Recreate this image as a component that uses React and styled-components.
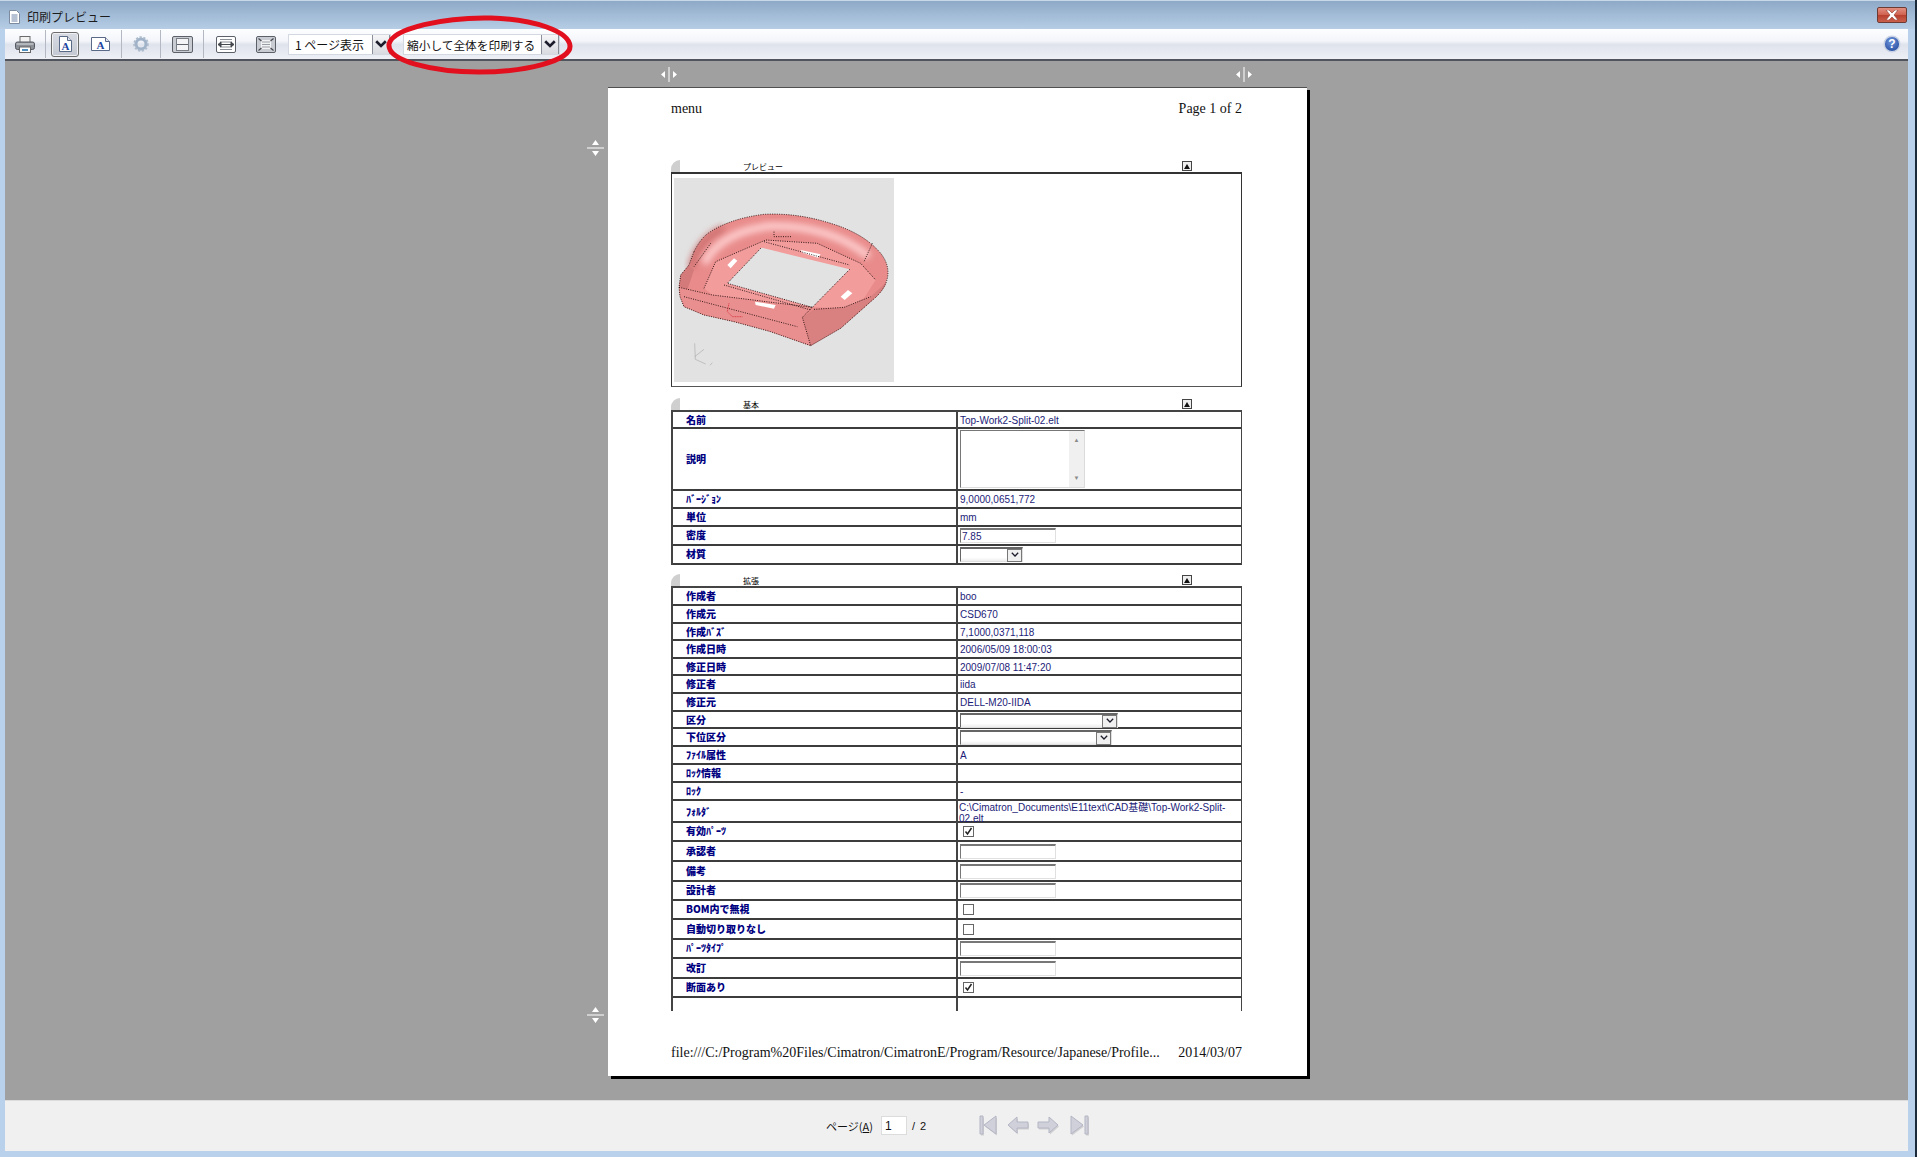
import React from "react";
import styled, { createGlobalStyle } from "styled-components";

const GlobalStyle = createGlobalStyle`
  html, body {
    margin: 0;
    padding: 0;
    background: #b9d1ea;
    overflow: hidden;
  }
  * {
    box-sizing: border-box;
  }
`;

const Window = styled.div`
  position: relative;
  width: 1917px;
  height: 1157px;
  display: flex;
  flex-direction: column;
  background: #b9d1ea;
  border-right: 2px solid #1a2a3a;
  font-family: "Noto Sans CJK JP", "Liberation Sans", sans-serif;
`;

const TitleBar = styled.div`
  height: 29px;
  display: flex;
  align-items: center;
  padding: 3px 8px 0 9px;
  gap: 7px;
  background: linear-gradient(#8ea9c7, #b6cde5);
  border-top: 1px solid #c8d8e8;
  font-size: 12px;
  color: #1c1c1c;
`;

const CloseButton = styled.div`
  margin-left: auto;
  width: 30px;
  height: 16px;
  margin-top: -3px;
  display: flex;
  align-items: center;
  justify-content: center;
  border: 1px solid #6e3a34;
  border-radius: 2px;
  background: linear-gradient(#e28f80 0%, #d0604e 50%, #b8402e 52%, #c9604c 100%);
`;

const Body = styled.div`
  flex: 1;
  display: flex;
  flex-direction: column;
  margin: 0 7px 6px 5px;
  min-height: 0;
`;

const Toolbar = styled.div`
  height: 30px;
  display: flex;
  align-items: center;
  padding-left: 10px;
  background: linear-gradient(#fdfeff 0%, #f3f5fa 40%, #dfe3ec 52%, #eef0f6 100%);
`;

const ToolIcon = styled.div`
  width: ${(p) => p.$w}px;
  margin-left: ${(p) => p.$ml || 0}px;
  height: 25px;
  flex: none;
  display: flex;
  align-items: center;
  justify-content: center;
  ${(p) =>
    p.$active &&
    `
    border: 1px solid #6c6c6c;
    border-radius: 3px;
    background: linear-gradient(#d8dbe2, #c4c8d2);
    box-shadow: inset 0 0 0 1px #eef0f4;
  `}
`;

const ToolSep = styled.div`
  width: 1px;
  height: 28px;
  flex: none;
  margin-left: ${(p) => p.$ml}px;
  background: #b4b8c2;
`;

const ToolCombo = styled.div`
  width: ${(p) => p.$w}px;
  margin-left: ${(p) => p.$ml}px;
  height: 21px;
  flex: none;
  display: flex;
  align-items: center;
  justify-content: space-between;
  padding-left: ${(p) => p.$pad}px;
  background: #fff;
  border: 1px solid #d4d8e0;
  font-size: ${(p) => p.$size}px;
  color: #111;
  white-space: nowrap;
  overflow: hidden;
`;

const ToolComboArrow = styled.div`
  width: 18px;
  height: 21px;
  flex: none;
  display: flex;
  align-items: center;
  justify-content: center;
  border: 1px solid #8a8f9a;
  background: linear-gradient(#f6f6f8, #d8dae0);
`;

const Viewer = styled.div`
  position: relative;
  height: 1041px;
  flex: none;
  display: flex;
  justify-content: center;
  padding: 26px 0 0 2px;
  background: #a0a0a0;
  border-top: 2px solid #50545c;
`;

const MarginHandle = styled.div`
  position: absolute;
  left: ${(p) => p.$x}px;
  top: ${(p) => p.$y}px;
  display: flex;
  line-height: 0;
`;

const Page = styled.div`
  width: 699px;
  height: 989px;
  flex: none;
  display: flex;
  flex-direction: column;
  padding: 13px 65px 15px 63px;
  background: #fff;
  border-top: 1px solid #505050;
  box-shadow: 3px 3px 0 #000;
  font-family: "Liberation Serif", serif;
  color: #111;
`;

const PageLine = styled.div`
  display: flex;
  justify-content: space-between;
  font-size: 14px;
  line-height: 16px;
  white-space: nowrap;
  margin-top: ${(p) => p.$mt || "0"};
`;

const SectionHead = styled.div`
  position: relative;
  height: 12px;
  margin-top: ${(p) => p.$mt}px;
  padding-left: 72px;
  font-family: "Noto Sans CJK JP", sans-serif;
  font-size: 8px;
  line-height: 13px;
  color: #000;
`;

const HeadCorner = styled.div`
  position: absolute;
  left: 0;
  top: 0;
  width: 9px;
  height: 12px;
  background: #cfcfcf;
  border-top-left-radius: 9px;
`;

const HeadToggle = styled.div`
  position: absolute;
  left: 511px;
  top: 1px;
  width: 10px;
  height: 10px;
  display: flex;
  align-items: center;
  justify-content: center;
  border: 1px solid #444;
  background: #eee;
`;

const PreviewFrame = styled.div`
  height: 215px;
  padding: 4px 2px;
  border: 1px solid #333;
  border-top-width: 2px;
  border-bottom-color: #555;
`;

const PreviewImage = styled.div`
  width: 220px;
  height: 204px;
  background: #e2e2e2;
  line-height: 0;
`;

const PropTable = styled.div`
  border-top: 2px solid #444;
  border-left: 2px solid #444;
  border-right: 1px solid #444;
`;

const Row = styled.div`
  display: grid;
  grid-template-columns: 285px 1fr;
  height: ${(p) => p.$h}px;
  border-bottom: ${(p) => (p.$open ? "none" : "2px solid #3c3c3c")};
`;

const Label = styled.div`
  display: flex;
  align-items: center;
  padding: 0 0 2px 13px;
  border-right: 2px solid #444;
  font-family: "Noto Sans CJK JP", sans-serif;
  font-weight: 900;
  font-size: 10px;
  color: #000080;
  white-space: nowrap;
`;

const Value = styled.div`
  display: flex;
  align-items: center;
  padding-left: 2px;
  font-family: "Liberation Sans", "Noto Sans CJK JP", sans-serif;
  font-size: 10px;
  line-height: 12px;
  color: #1c1c78;
  min-width: 0;
`;

const WrapText = styled.div`
  margin: 1px 0 0 -1px;
  line-height: 11px;
`;

const TextBox = styled.input`
  width: 96px;
  height: 15px;
  padding: 0 1px;
  border-style: solid;
  border-width: 2px 1px 1px 1px;
  border-color: #777 #e0e0e0 #e0e0e0 #777;
  outline: none;
  background: #fff;
  font-family: "Liberation Sans", sans-serif;
  font-size: 10px;
  color: #1c1c78;
`;

const MemoBox = styled.div`
  width: 125px;
  height: 58px;
  display: flex;
  justify-content: flex-end;
  border-style: solid;
  border-width: 1px;
  border-color: #777 #dcdcdc #dcdcdc #777;
  background: #fff;
`;

const MemoScroll = styled.div`
  width: 15px;
  display: flex;
  flex-direction: column;
  justify-content: space-between;
  align-items: center;
  padding: 6px 0;
  background: #f0f0f0;
  font-size: 6px;
  line-height: 6px;
  color: #8a8a8a;
`;

const ComboBox = styled.div`
  width: ${(p) => p.$w}px;
  height: 15px;
  display: flex;
  justify-content: flex-end;
  align-items: center;
  border-style: solid;
  border-width: 2px 1px 1px 1px;
  border-color: #666 #e0e0e0 #e0e0e0 #666;
  background: linear-gradient(#fff 70%, #eee);
`;

const ComboArrow = styled.div`
  width: 15px;
  height: 13px;
  display: flex;
  align-items: center;
  justify-content: center;
  border: 1px solid #777;
  background: #f0f0f0;
`;

const CheckBox = styled.div`
  width: 11px;
  height: 11px;
  margin-left: 3px;
  display: flex;
  align-items: center;
  justify-content: center;
  border: 1px solid #666;
  background: #fff;
`;

const BottomBar = styled.div`
  height: 51px;
  flex: none;
  display: flex;
  align-items: center;
  padding: 0 0 1px 821px;
  background: #f0f0f0;
  border-top: 1px solid #dcdcdc;
  font-size: 11px;
  color: #111;
`;

const PageLabel = styled.span`
  width: 55px;
  flex: none;
  u {
    text-underline-offset: 1px;
  }
`;

const PageInput = styled.input`
  width: 26px;
  height: 19px;
  flex: none;
  padding: 0 0 0 3px;
  border: 1px solid #dcdcdc;
  outline: none;
  background: #fff;
  font-family: "Liberation Sans", sans-serif;
  font-size: 12px;
  color: #111;
`;

const PageTotal = styled.span`
  width: 72px;
  flex: none;
  padding-left: 5px;
  font-family: "Liberation Sans", sans-serif;
  word-spacing: 2px;
`;

const NavButton = styled.div`
  width: ${(p) => p.$w}px;
  margin-right: ${(p) => p.$mr}px;
  height: 21px;
  flex: none;
  line-height: 0;
`;

const Annotation = styled.svg`
  position: absolute;
  left: 383px;
  top: 14px;
  pointer-events: none;
`;

const DocIcon = () => (
  <svg width="11" height="14" viewBox="0 0 11 14">
    <path d="M.5.5h7l3 3v10H.5z" fill="#fff" stroke="#7d8ba0" />
    <path d="M2.5 5h6M2.5 7h6M2.5 9h6M2.5 11h6" stroke="#6f86a8" />
  </svg>
);

const CloseGlyph = () => (
  <svg width="14" height="10" viewBox="0 0 14 10">
    <path d="M1 0h3l3 3 3-3h3L9 5l4 5h-3L7 7l-3 3H1l4-5z" fill="#fff" stroke="#8a3a30" strokeWidth=".6" />
  </svg>
);

const PrinterIcon = () => (
  <svg width="20" height="17" viewBox="0 0 20 17">
    <rect x="5" y=".5" width="10" height="6" fill="#f2f2f2" stroke="#6a6a6a" />
    <rect x=".5" y="6" width="19" height="7.5" rx="2" fill="#8b8f96" stroke="#55585e" />
    <rect x="1.5" y="7" width="17" height="2" fill="#b4b7bc" />
    <rect x="4.5" y="11" width="11" height="5.5" fill="#fff" stroke="#666" />
    <rect x="7" y="13" width="6" height="2" fill="#4f8fc0" />
  </svg>
);

const PageA = ({ wide }) => {
  const w = wide ? 19 : 13;
  return (
    <svg width={w} height={wide ? 14 : 16} viewBox={`0 0 ${w} ${wide ? 14 : 16}`}>
      <path d={`M.5.5h${w - 5}l4 4v${wide ? 9 : 11}H.5z`} fill="#fff" stroke="#5a6a86" />
      <path d={`M${w - 4.5} .5v4h4`} fill="#dfe4ee" stroke="#5a6a86" />
      <text
        x={w / 2}
        y={wide ? 12 : 14}
        textAnchor="middle"
        fontFamily="Liberation Serif"
        fontWeight="700"
        fontSize="11"
        fill="#1c44a0"
      >
        A
      </text>
    </svg>
  );
};

const GearIcon = () => (
  <svg width="16" height="16" viewBox="0 0 16 16">
    <circle cx="8" cy="8" r="5" fill="none" stroke="#9fb2c8" strokeWidth="3" />
    <circle cx="8" cy="8" r="6.8" fill="none" stroke="#aebccd" strokeWidth="2" strokeDasharray="2.2 1.6" />
  </svg>
);

const FitFrame = ({ children, w = 21, h = 17, fill = "#dfe1e6" }) => (
  <svg width={w} height={h} viewBox={`0 0 ${w} ${h}`}>
    <rect x=".5" y=".5" width={w - 1} height={h - 1} rx="1.5" fill={fill} stroke="#5c6068" />
    {children}
  </svg>
);

const SinglePageIcon = () => (
  <FitFrame fill="#c9ccd3">
    <rect x="4.5" y="2.5" width="12" height="12" fill="#f4f4f6" stroke="#7a7e86" />
    <path d="M5 8.5h11" stroke="#60646c" />
  </FitFrame>
);

const FitWidthIcon = () => (
  <FitFrame w={20} fill="#fff">
    <path d="M4 3.5h12M4 6h12M4 11h12M4 13.5h12" stroke="#8a8e96" />
    <path d="M2 8.5h16M2 8.5l3-2.5v5zM18 8.5l-3-2.5v5z" fill="#44484f" stroke="#44484f" />
  </FitFrame>
);

const FitPageIcon = () => (
  <FitFrame w={20} fill="#c9ccd3">
    <rect x="5" y="4" width="10" height="9" fill="#f1f2f4" />
    <path d="M6 6h8M6 8.5h8M6 11h8" stroke="#9a9ea6" />
    <path d="M2.5 2.5l3 2.5M17.5 2.5l-3 2.5M2.5 14.5l3-2.5M17.5 14.5l-3-2.5" stroke="#44484f" strokeWidth="1.2" />
  </FitFrame>
);

const HelpIcon = () => (
  <svg width="18" height="18" viewBox="0 0 18 18">
    <defs>
      <radialGradient id="helpFill" cx="45%" cy="35%" r="70%">
        <stop offset="0%" stopColor="#6f95dc" />
        <stop offset="100%" stopColor="#234a9c" />
      </radialGradient>
    </defs>
    <circle cx="9" cy="9" r="7.8" fill="url(#helpFill)" stroke="#c8d2e4" strokeWidth="1.4" />
    <text x="9" y="13.2" textAnchor="middle" fontFamily="Liberation Sans" fontWeight="700" fontSize="12" fill="#fff">
      ?
    </text>
  </svg>
);

const Chevron = ({ size = 12, weight = 2.2 }) => (
  <svg width={size} height={size * 0.7} viewBox="0 0 10 7">
    <path d="M1 1l4 4 4-4" fill="none" stroke="#1c1c2c" strokeWidth={weight} />
  </svg>
);

const VerticalHandle = () => (
  <svg width="18" height="15" viewBox="0 0 18 15">
    <path d="M9 0v15" stroke="#fff" />
    <path d="M1 7.5l4-3.5v7zM17 7.5l-4-3.5v7z" fill="#fff" />
  </svg>
);

const HorizontalHandle = () => (
  <svg width="17" height="18" viewBox="0 0 17 18">
    <path d="M0 9h17" stroke="#fff" />
    <path d="M8.5 1l3.5 5H5zM8.5 17l3.5-5H5z" fill="#fff" />
  </svg>
);

const ToggleGlyph = () => (
  <svg width="6" height="5" viewBox="0 0 6 5">
    <path d="M3 0l3 5H0z" fill="#111" />
  </svg>
);

const Tick = () => (
  <svg width="9" height="9" viewBox="0 0 9 9">
    <path d="M1.5 4.5l2 2.5 4-6" fill="none" stroke="#222" strokeWidth="1.5" />
  </svg>
);

const NavIcon = ({ kind }) => {
  const shapes = {
    first: "M1 1h3v18H1zM17 1v18L5 10z",
    prev: "M1 10l9-8v5h11v6H10v5z",
    next: "M21 10l-9-8v5H1v6h11v5z",
    last: "M16 1h3v18h-3zM2 1v18l12-9z",
  };
  return (
    <svg width="22" height="21" viewBox="0 0 22 21">
      <path d={shapes[kind]} transform="translate(1 1.5)" fill="#a8a8b0" opacity=".45" />
      <path d={shapes[kind]} fill="#cfd0da" stroke="#b4b6c4" />
    </svg>
  );
};

const MODEL_OUTLINE =
  "M60 155Q80 115 105 98Q170 55 270 43Q370 38 470 70Q570 100 620 160Q648 195 640 235Q632 272 590 305L500 385L410 437L290 395L180 365L90 345L30 320L18 290L15 262L20 225L45 195Z";

// part model thumbnail, coordinates are 3x the image pixels
const ModelPicture = () => (
  <svg width="220" height="204" viewBox="0 -66 660 612">
    <defs>
      <filter id="soft" x="-20%" y="-20%" width="140%" height="140%">
        <feGaussianBlur stdDeviation="9" />
      </filter>
    </defs>
    <path d={MODEL_OUTLINE} fill="#e98b8b" />
    <path d="M52 205Q70 120 150 85" fill="none" stroke="#cf7272" strokeWidth="22" filter="url(#soft)" />
    <path d="M90 190Q140 95 290 78Q470 76 585 170" fill="none" stroke="#fdcaca" strokeWidth="24" filter="url(#soft)" />
    <path d="M15 262L20 225L45 195L60 210L40 270Z" fill="#d57a7a" />
    <path d="M90 265L125 185L275 120L430 130L560 190L605 240L570 295L510 325L415 322L115 285Z" fill="#f29c9c" />
    <path d="M15 262L115 285L415 322L385 352L410 437L290 395L180 365L90 345L30 320L18 290Z" fill="#ea8f8f" />
    <path d="M385 352L420 328L510 322L590 290L638 245Q632 272 590 305L500 385L410 437Z" fill="#d98080" />
    <path d="M262 143L527 208L415 322L160 250Z" fill="#e2e2e2" />
    <path d="M380 150L440 163L432 173L385 158ZM160 195L180 175L190 182L170 205ZM243 305L305 315L300 326L245 315ZM500 290L522 270L535 280L512 300Z" fill="#fff" />
    <g fill="none" stroke="#1a0808" strokeWidth="2.6" strokeDasharray="3 4">
      <path d={MODEL_OUTLINE} />
      <path d="M90 265L125 185L275 120L430 130L560 190L605 240" />
      <path d="M270 125L527 195M527 208L415 322L160 250L262 143M150 255L410 330" />
      <path d="M15 262L115 285L415 322L385 352L410 437M30 290L370 380" />
      <path d="M110 130L60 200M595 130L570 185M420 328L510 322L590 290M300 95v15h55" />
    </g>
    <path d="M165 310L160 335L175 350L205 350" fill="none" stroke="#d01020" strokeWidth="2" strokeDasharray="3 2" />
    <path d="M62 430L64 478L95 492M62 470L90 448M115 488L108 496" fill="none" stroke="#9a9a9a" strokeWidth="1.5" />
  </svg>
);

const Combo = ({ w }) => (
  <ComboBox $w={w}>
    <ComboArrow>
      <Chevron size={8} weight={1.6} />
    </ComboArrow>
  </ComboBox>
);

const Memo = () => (
  <MemoBox>
    <MemoScroll>
      <span>▲</span>
      <span>▼</span>
    </MemoScroll>
  </MemoBox>
);

const basicRows = [
  { label: "名前", h: 17, value: "Top-Work2-Split-02.elt" },
  { label: "説明", h: 62, control: <Memo /> },
  { label: "ﾊﾞｰｼﾞｮﾝ", h: 18, value: "9,0000,0651,772" },
  { label: "単位", h: 18, value: "mm" },
  { label: "密度", h: 19, control: <TextBox readOnly value="7.85" /> },
  { label: "材質", h: 19, control: <Combo w={63} /> },
];

const extraRows = [
  { label: "作成者", h: 18, value: "boo" },
  { label: "作成元", h: 18, value: "CSD670" },
  { label: "作成ﾊﾞｽﾞ", h: 17, value: "7,1000,0371,118" },
  { label: "作成日時", h: 18, value: "2006/05/09 18:00:03" },
  { label: "修正日時", h: 17, value: "2009/07/08 11:47:20" },
  { label: "修正者", h: 18, value: "iida" },
  { label: "修正元", h: 18, value: "DELL-M20-IIDA" },
  { label: "区分", h: 17, control: <Combo w={158} /> },
  { label: "下位区分", h: 18, control: <Combo w={152} /> },
  { label: "ﾌｧｲﾙ属性", h: 18, value: "A" },
  { label: "ﾛｯｸ情報", h: 18 },
  { label: "ﾛｯｸ", h: 18, value: "-" },
  {
    label: "ﾌｫﾙﾀﾞ",
    h: 22,
    control: <WrapText>C:\Cimatron_Documents\E11text\CAD基礎\Top-Work2-Split-02.elt</WrapText>,
  },
  { label: "有効ﾊﾟｰﾂ", h: 19, control: <CheckBox><Tick /></CheckBox> },
  { label: "承認者", h: 20, control: <TextBox readOnly /> },
  { label: "備考", h: 20, control: <TextBox readOnly /> },
  { label: "設計者", h: 19, control: <TextBox readOnly /> },
  { label: "BOM内で無視", h: 19, control: <CheckBox /> },
  { label: "自動切り取りなし", h: 20, control: <CheckBox /> },
  { label: "ﾊﾟｰﾂﾀｲﾌﾟ", h: 19, control: <TextBox readOnly /> },
  { label: "改訂", h: 20, control: <TextBox readOnly /> },
  { label: "断面あり", h: 19, control: <CheckBox><Tick /></CheckBox> },
  { label: "", h: 13, open: true },
];

const Rows = ({ rows }) => (
  <PropTable>
    {rows.map((row, i) => (
      <Row key={i} $h={row.h} $open={row.open}>
        <Label>{row.label}</Label>
        <Value>{row.control || row.value}</Value>
      </Row>
    ))}
  </PropTable>
);

const Section = ({ title, mt, children }) => (
  <>
    <SectionHead $mt={mt}>
      <HeadCorner />
      {title}
      <HeadToggle>
        <ToggleGlyph />
      </HeadToggle>
    </SectionHead>
    {children}
  </>
);

const App = () => {
  return (
    <Window>
      <GlobalStyle />
      <TitleBar>
        <DocIcon />
        <span>印刷プレビュー</span>
        <CloseButton>
          <CloseGlyph />
        </CloseButton>
      </TitleBar>

      <Body>
        <Toolbar>
          <ToolIcon $w={20}><PrinterIcon /></ToolIcon>
          <ToolSep $ml={10} />
          <ToolIcon $w={28} $ml={5} $active><PageA /></ToolIcon>
          <ToolIcon $w={19} $ml={12}><PageA wide /></ToolIcon>
          <ToolSep $ml={11} />
          <ToolIcon $w={16} $ml={11}><GearIcon /></ToolIcon>
          <ToolSep $ml={11} />
          <ToolIcon $w={21} $ml={11}><SinglePageIcon /></ToolIcon>
          <ToolSep $ml={10} />
          <ToolIcon $w={20} $ml={12}><FitWidthIcon /></ToolIcon>
          <ToolIcon $w={20} $ml={20}><FitPageIcon /></ToolIcon>
          <ToolCombo $w={103} $ml={12} $pad={6} $size={12}>
            1 ページ表示
            <ToolComboArrow><Chevron /></ToolComboArrow>
          </ToolCombo>
          <ToolCombo $w={157} $ml={12} $pad={3} $size={11.7}>
            縮小して全体を印刷する
            <ToolComboArrow><Chevron /></ToolComboArrow>
          </ToolCombo>
          <ToolIcon $w={18} $ml={1323}><HelpIcon /></ToolIcon>
        </Toolbar>

        <Viewer>
          <MarginHandle $x={655} $y={6}><VerticalHandle /></MarginHandle>
          <MarginHandle $x={1230} $y={6}><VerticalHandle /></MarginHandle>
          <MarginHandle $x={582} $y={78}><HorizontalHandle /></MarginHandle>
          <MarginHandle $x={582} $y={945}><HorizontalHandle /></MarginHandle>

          <Page>
            <PageLine>
              <span>menu</span>
              <span>Page 1 of 2</span>
            </PageLine>

            <Section title="プレビュー" mt={43}>
              <PreviewFrame>
                <PreviewImage>
                  <ModelPicture />
                </PreviewImage>
              </PreviewFrame>
            </Section>

            <Section title="基本" mt={11}>
              <Rows rows={basicRows} />
            </Section>

            <Section title="拡張" mt={9}>
              <Rows rows={extraRows} />
            </Section>

            <PageLine $mt="auto">
              <span>file:///C:/Program%20Files/Cimatron/CimatronE/Program/Resource/Japanese/Profile...</span>
              <span>2014/03/07</span>
            </PageLine>
          </Page>
        </Viewer>

        <BottomBar>
          <PageLabel>ページ(<u>A</u>)</PageLabel>
          <PageInput readOnly value="1" />
          <PageTotal>/ 2</PageTotal>
          <NavButton $w={18} $mr={10}><NavIcon kind="first" /></NavButton>
          <NavButton $w={22} $mr={8}><NavIcon kind="prev" /></NavButton>
          <NavButton $w={22} $mr={10}><NavIcon kind="next" /></NavButton>
          <NavButton $w={20} $mr={0}><NavIcon kind="last" /></NavButton>
        </BottomBar>
      </Body>

      <Annotation width="192" height="62" viewBox="0 0 192 62">
        <path
          d="M6 30C10 14 62 3 108 4C150 5 186 17 187 32C188 47 142 58 96 58C50 58 4 47 6 30Z"
          fill="none"
          stroke="#e2101e"
          strokeWidth="5"
        />
      </Annotation>
    </Window>
  );
};

export default App;
